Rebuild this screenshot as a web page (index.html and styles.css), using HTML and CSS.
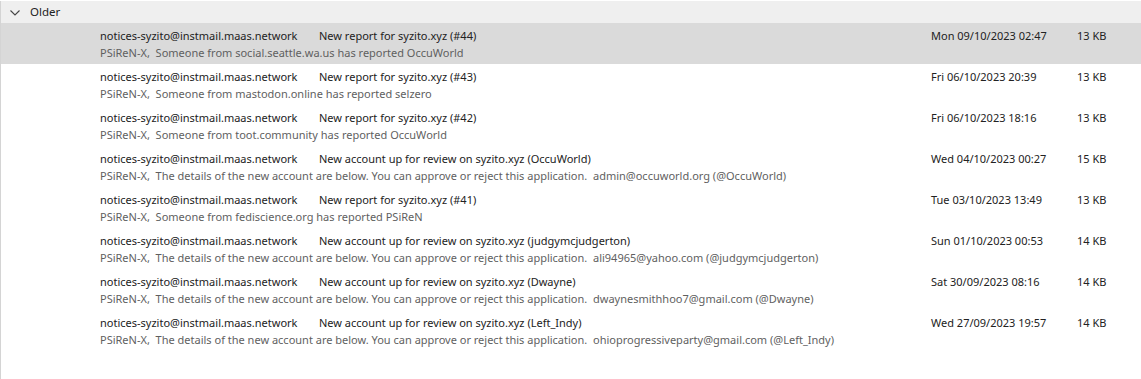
FILE: index.html
```html
<!DOCTYPE html>
<html lang="en">
<head>
    <meta charset="UTF-8">
    <title>Inbox - Older</title>
    <link rel="stylesheet" href="styles.css">
</head>
<body>
    <div class="mail-list">
        <!-- Group header -->
        <div class="group-header">
            <svg class="chevron" width="10" height="6" viewBox="0 0 10 6"><path d="M0.5 0.5 L5 5 L9.5 0.5" fill="none" stroke="#444" stroke-width="1.1"/></svg>
            <span>Older</span>
        </div>

        <div class="mail-row selected">
            <div class="mail-main">
                <div class="mail-top"><span class="sender">notices-syzito@instmail.maas.network</span><span class="subject">New report for syzito.xyz (#44)</span></div>
                <div class="preview">PSiReN-X,&nbsp; Someone from social.seattle.wa.us has reported OccuWorld</div>
            </div>
            <div class="date">Mon 09/10/2023 02:47</div>
            <div class="size">13 KB</div>
        </div>

        <div class="mail-row">
            <div class="mail-main">
                <div class="mail-top"><span class="sender">notices-syzito@instmail.maas.network</span><span class="subject">New report for syzito.xyz (#43)</span></div>
                <div class="preview">PSiReN-X,&nbsp; Someone from mastodon.online has reported selzero</div>
            </div>
            <div class="date">Fri 06/10/2023 20:39</div>
            <div class="size">13 KB</div>
        </div>

        <div class="mail-row">
            <div class="mail-main">
                <div class="mail-top"><span class="sender">notices-syzito@instmail.maas.network</span><span class="subject">New report for syzito.xyz (#42)</span></div>
                <div class="preview">PSiReN-X,&nbsp; Someone from toot.community has reported OccuWorld</div>
            </div>
            <div class="date">Fri 06/10/2023 18:16</div>
            <div class="size">13 KB</div>
        </div>

        <div class="mail-row">
            <div class="mail-main">
                <div class="mail-top"><span class="sender">notices-syzito@instmail.maas.network</span><span class="subject">New account up for review on syzito.xyz (OccuWorld)</span></div>
                <div class="preview">PSiReN-X,&nbsp; The details of the new account are below. You can approve or reject this application.&nbsp; admin@occuworld.org (@OccuWorld)</div>
            </div>
            <div class="date">Wed 04/10/2023 00:27</div>
            <div class="size">15 KB</div>
        </div>

        <div class="mail-row">
            <div class="mail-main">
                <div class="mail-top"><span class="sender">notices-syzito@instmail.maas.network</span><span class="subject">New report for syzito.xyz (#41)</span></div>
                <div class="preview">PSiReN-X,&nbsp; Someone from fediscience.org has reported PSiReN</div>
            </div>
            <div class="date">Tue 03/10/2023 13:49</div>
            <div class="size">13 KB</div>
        </div>

        <div class="mail-row">
            <div class="mail-main">
                <div class="mail-top"><span class="sender">notices-syzito@instmail.maas.network</span><span class="subject">New account up for review on syzito.xyz (judgymcjudgerton)</span></div>
                <div class="preview">PSiReN-X,&nbsp; The details of the new account are below. You can approve or reject this application.&nbsp; ali94965@yahoo.com (@judgymcjudgerton)</div>
            </div>
            <div class="date">Sun 01/10/2023 00:53</div>
            <div class="size">14 KB</div>
        </div>

        <div class="mail-row">
            <div class="mail-main">
                <div class="mail-top"><span class="sender">notices-syzito@instmail.maas.network</span><span class="subject">New account up for review on syzito.xyz (Dwayne)</span></div>
                <div class="preview">PSiReN-X,&nbsp; The details of the new account are below. You can approve or reject this application.&nbsp; dwaynesmithhoo7@gmail.com (@Dwayne)</div>
            </div>
            <div class="date">Sat 30/09/2023 08:16</div>
            <div class="size">14 KB</div>
        </div>

        <div class="mail-row">
            <div class="mail-main">
                <div class="mail-top"><span class="sender">notices-syzito@instmail.maas.network</span><span class="subject">New account up for review on syzito.xyz (Left_Indy)</span></div>
                <div class="preview">PSiReN-X,&nbsp; The details of the new account are below. You can approve or reject this application.&nbsp; ohioprogressiveparty@gmail.com (@Left_Indy)</div>
            </div>
            <div class="date">Wed 27/09/2023 19:57</div>
            <div class="size">14 KB</div>
        </div>
    </div>
</body>
</html>
```

FILE: styles.css
```css
body {
    margin: 0;
    background: #fff;
    font-family: "Noto Sans", "Open Sans", sans-serif;
    font-size: 11px;
    color: #222;
}

.mail-list {
    height: 379px;
    border-left: 1px solid #d4d4d4;
    box-sizing: border-box;
}

.group-header {
    display: flex;
    align-items: center;
    height: 22px;
    margin-top: 1px;
    background: #efefef;
    padding-left: 9px;
    font-size: 11.5px;
    line-height: 20px;
}

.chevron {
    margin-right: 10px;
    margin-top: 1px;
}

.mail-row {
    display: flex;
    height: 41px;
    box-sizing: border-box;
    padding-top: 4px;
    padding-left: 99px;
    line-height: 17px;
}

.mail-row.selected {
    background: #dadada;
}

.mail-main {
    width: 831px;
    white-space: nowrap;
    overflow: hidden;
}

.sender {
    display: inline-block;
    width: 219px;
}

.preview {
    color: #5f5f5f;
}

.date {
    width: 146px;
}

.size {
    flex: 1;
}
```
